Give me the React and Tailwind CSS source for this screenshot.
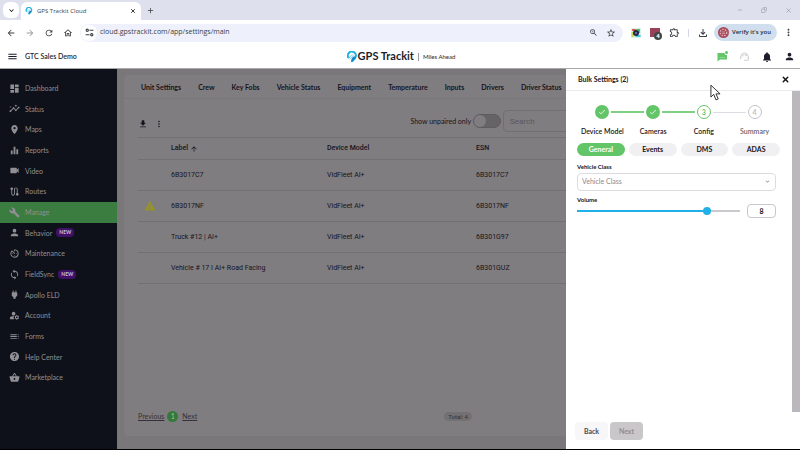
import { useState } from "react";
import {
  MdAdd,
  MdArrowBack,
  MdArrowForward,
  MdArrowUpward,
  MdAvTimer,
  MdBuild,
  MdCheck,
  MdDashboard,
  MdEqualizer,
  MdFileDownload,
  MdHelp,
  MdInsights,
  MdKeyboardArrowDown,
  MdLocationOn,
  MdManageAccounts,
  MdMenu,
  MdMoreVert,
  MdNotifications,
  MdOutlineExtension,
  MdOutlineFileDownload,
  MdOutlineHome,
  MdOutlineSupportAgent,
  MdPerson,
  MdPower,
  MdRefresh,
  MdRoute,
  MdShoppingBasket,
  MdStarBorder,
  MdSync,
  MdToc,
  MdVideocam,
  MdWarning,
  MdZoomIn,
} from "react-icons/md";
import { Copy, Minus, X } from "lucide-react";

const navItems = [
  { label: "Dashboard", icon: MdDashboard },
  { label: "Status", icon: MdInsights },
  { label: "Maps", icon: MdLocationOn },
  { label: "Reports", icon: MdEqualizer },
  { label: "Video", icon: MdVideocam },
  { label: "Routes", icon: MdRoute },
  { label: "Manage", icon: MdBuild, active: true },
  { label: "Behavior", icon: MdPerson, isNew: true },
  { label: "Maintenance", icon: MdAvTimer },
  { label: "FieldSync", icon: MdSync, isNew: true },
  { label: "Apollo ELD", icon: MdPower },
  { label: "Account", icon: MdManageAccounts },
  { label: "Forms", icon: MdToc },
  { label: "Help Center", icon: MdHelp },
  { label: "Marketplace", icon: MdShoppingBasket },
];

const tabs = [
  "Unit Settings",
  "Crew",
  "Key Fobs",
  "Vehicle Status",
  "Equipment",
  "Temperature",
  "Inputs",
  "Drivers",
  "Driver Status",
];

const units = [
  { label: "6B3017C7", model: "VidFleet AI+", esn: "6B3017C7" },
  { label: "6B3017NF", model: "VidFleet AI+", esn: "6B3017NF", warning: true },
  { label: "Truck #12 | AI+", model: "VidFleet AI+", esn: "6B301G97" },
  {
    label: "Vehicle # 17 I AI+ Road Facing",
    model: "VidFleet AI+",
    esn: "6B301GUZ",
  },
];

const steps = [
  { label: "Device Model", state: "done" },
  { label: "Cameras", state: "done" },
  { label: "Config", state: "current" },
  { label: "Summary", state: "todo" },
];

const sections = ["General", "Events", "DMS", "ADAS"];

const PinLogo = ({ className }) => (
  <svg viewBox="0 0 24 30" className={className} aria-hidden="true">
    <path
      d="M4 18A10 10 0 1 1 21 15C19 20 15 22 12 27"
      fill="none"
      stroke="#1fb4e6"
      strokeWidth="5"
      strokeLinejoin="round"
    />
    <path d="M10 29C9 23 11 18 16 14L22 14C21 21 15 23 10 29Z" fill="#1583c7" />
    <path
      d="M5 17L12 9M8 20L15 11"
      stroke="#53c8ee"
      strokeWidth="2"
      strokeLinecap="round"
    />
  </svg>
);

const ChatIcon = () => (
  <svg viewBox="0 0 22 22" className="h-[11px] w-[11px] text-[#62c568]" aria-hidden="true">
    <path d="M1 4H15A4 4 0 0 0 20 8V17H6L1 21Z" fill="currentColor" />
    <path d="M5 13H16" stroke="#bfe8c1" strokeWidth="1" />
    <circle cx="19" cy="3" r="3" fill="currentColor" />
  </svg>
);

const BrowserChrome = () => (
  <div className="bg-[#dee1ed] font-['Open_Sans',sans-serif] text-[#3c4043]">
    <div className="flex h-5 items-center pr-2 pl-[3px]">
      <button
        aria-label="Search tabs"
        className="flex h-4 w-4 items-center justify-center rounded-md bg-white text-black"
      >
        <MdKeyboardArrowDown size={9} />
      </button>
      <div className="ml-[2px] flex h-full items-end">
        <div className="flex h-[18px] w-[120px] items-center rounded-t-md bg-white px-1">
          <PinLogo className="h-2 w-2" />
          <span className="ml-1 flex-1 text-[6px]">GPS Trackit Cloud</span>
          <button aria-label="Close tab" className="p-px text-black">
            <X size={6} strokeWidth={3} />
          </button>
        </div>
      </div>
      <button aria-label="New tab" className="ml-1 p-px">
        <MdAdd size={9} />
      </button>
      <div className="ml-auto flex items-center gap-[18px] text-[#8b8d96]">
        <Minus size={6} />
        <Copy size={6} className="-scale-x-100" />
        <X size={7} />
      </div>
    </div>
    <div className="flex h-[25px] items-center bg-white pr-[6px] pl-[6px]">
      <div className="flex items-center gap-[9px]">
        <MdArrowBack size={10} />
        <MdArrowForward size={10} className="text-[#9a9ca3]" />
        <MdRefresh size={10} />
        <MdOutlineHome size={10} />
      </div>
      <div className="ml-[7px] flex h-[18px] flex-1 items-center rounded-full bg-[#eef1fb] pr-[7px] pl-px">
        <span className="flex h-4 w-4 items-center justify-center rounded-full bg-white">
          <svg
            viewBox="0 0 16 16"
            className="h-[9px] w-[9px]"
            fill="none"
            stroke="currentColor"
            strokeWidth="2"
          >
            <circle cx="4" cy="4" r="2" />
            <path d="M8 4H15M1 12H8" />
            <circle cx="12" cy="12" r="2" />
          </svg>
        </span>
        <input
          aria-label="Address"
          defaultValue="cloud.gpstrackit.com/app/settings/main"
          className="ml-[3px] min-w-0 flex-1 bg-transparent text-[7px] outline-none"
        />
        <MdZoomIn size={9} />
        <MdStarBorder size={10} className="ml-2" />
      </div>
      <div className="flex items-center pl-2">
        <svg viewBox="0 0 20 20" className="h-[10px] w-[10px]">
          <rect width="20" height="20" fill="#d9f3e6" />
          <path d="M2 2H10V6H2Z" fill="#e85b4a" />
          <path d="M10 2H18V10H14Z" fill="#4fc06b" />
          <path d="M12 14H19V18H8Z" fill="#39cfe0" />
          <path d="M1 8H5V18H1Z" fill="#b9dc4d" />
          <circle cx="10" cy="10" r="6" fill="#2b2547" />
          <circle cx="10" cy="10" r="2" fill="#6b86d6" />
        </svg>
        <span className="relative ml-[9px] h-[9px] w-[10px] bg-[#96435a]">
          <span className="absolute top-1 left-1 flex h-2 w-2 items-center justify-center rounded-sm bg-[#444] text-[6px] font-bold text-white">
            4
          </span>
        </span>
        <MdOutlineExtension size={11} className="ml-[9px]" />
        <span className="ml-2 h-2 w-px bg-[#d5d8e6]" />
        <MdOutlineFileDownload size={12} className="ml-2" />
        <button className="ml-[5px] flex h-[17px] items-center gap-[3px] rounded-full bg-[#d0deee] pr-[6px] pl-1 text-[6px] font-semibold text-[#20303f]">
          <svg viewBox="0 0 20 20" className="h-[11px] w-[11px]">
            <circle cx="10" cy="10" r="10" fill="#a8495a" />
            <circle
              cx="10"
              cy="10"
              r="6"
              fill="none"
              stroke="#e6b9c0"
              strokeWidth="2"
              strokeDasharray="3 2"
            />
            <path d="M7 9H13M7 12H13" stroke="#f0d4d8" strokeWidth="1" />
          </svg>
          Verify it's you
        </button>
        <MdMoreVert size={11} className="ml-[6px]" />
      </div>
    </div>
  </div>
);

const AppHeader = () => (
  <header className="grid h-6 grid-cols-3 items-center border-b border-[#a9a9ab] bg-white pr-[5px] pl-[7px] text-[#1d1d2b]">
    <div className="flex items-center gap-[7px]">
      <button aria-label="Toggle menu">
        <MdMenu size={11} />
      </button>
      <span className="text-[7px] font-semibold">GTC Sales Demo</span>
    </div>
    <div className="flex items-center justify-center">
      <PinLogo className="h-3 w-[10px]" />
      <span className="ml-px text-[11px] font-bold">GPS Trackit</span>
      <span className="mx-1 h-2 w-px bg-[#9a9aa2]" />
      <span className="text-[6px]">Miles Ahead</span>
    </div>
    <div className="flex items-center justify-end gap-[11px]">
      <ChatIcon />
      <MdOutlineSupportAgent size={11} className="text-[#cfcfd4]" />
      <MdNotifications size={12} />
      <MdPerson size={11} />
    </div>
  </header>
);

const Sidebar = () => (
  <nav className="w-[117px] shrink-0 bg-[#0e1119] pt-[9px] text-[#8f8f94]">
    <ul className="grid h-[310px] auto-rows-fr">
      {navItems.map(({ label, icon: Icon, active, isNew }) => (
        <li key={label} className={active ? "bg-[#3b7d40]" : ""}>
          <a href="#" className="flex h-full items-center pl-[9px] text-[7px]">
            <Icon size={11} />
            <span className="ml-[5px]">{label}</span>
            {isNew && (
              <span className="ml-1 flex h-[9px] items-center rounded-sm bg-[#3f1168] px-[3px] text-[5px] font-black text-[#c3b5d0]">
                NEW
              </span>
            )}
          </a>
        </li>
      ))}
    </ul>
  </nav>
);

const UnitsPanel = () => (
  <main className="min-w-0 flex-1 overflow-hidden bg-[#7a777a] pt-[6px] pb-[13px] pl-[7px] text-[#16141c]">
    <div className="flex h-full flex-col rounded-l-sm bg-[#807d80]">
      <div className="flex h-6 items-center gap-[17px] border-b border-[#7a777a] pt-px pl-[17px] text-[7px] font-bold whitespace-nowrap">
        {tabs.map((tab) => (
          <button key={tab} className="shrink-0">
            {tab}
          </button>
        ))}
      </div>

      <div className="flex h-[38px] items-center pl-[14px]">
        <div className="flex items-center gap-[6px] pt-3">
          <button aria-label="Download">
            <MdFileDownload size={10} />
          </button>
          <button aria-label="More options">
            <MdMoreVert size={10} />
          </button>
        </div>
        <div className="ml-auto flex shrink-0 items-center pt-[6px]">
          <label htmlFor="unpaired" className="text-[7px]">
            Show unpaired only
          </label>
          <input
            id="unpaired"
            type="checkbox"
            className="ml-[2px] h-[14px] w-7 appearance-none rounded-full border border-[#5f5c5f] bg-[#666366] before:block before:h-3 before:w-3 before:rounded-full before:bg-[#807d80]"
          />
          <input
            aria-label="Search"
            placeholder="Search"
            className="-mr-px ml-[2px] h-[22px] w-16 rounded-l-sm border border-[#726f72] pl-[6px] font-[Roboto,sans-serif] text-[8px] outline-none placeholder:text-[#5b585c]"
          />
        </div>
      </div>

      <div className="pl-[14px]">
        <table className="w-full table-fixed border-t border-[#727073] text-left font-[Roboto,sans-serif] text-[7px]">
          <thead>
            <tr className="h-[22px] border-b border-[#727073]">
              <th className="w-[33px]" />
              <th className="w-[156px] font-medium">
                <span className="flex items-center gap-[2px]">
                  Label <MdArrowUpward size={8} />
                </span>
              </th>
              <th className="w-[149px] font-medium">Device Model</th>
              <th className="font-medium">ESN</th>
            </tr>
          </thead>
          <tbody>
            {units.map((unit) => (
              <tr key={unit.label} className="h-[31px] border-b border-[#727073]">
                <td className="pl-[6px]">
                  {unit.warning && (
                    <MdWarning size={12} className="text-[#94932a]" />
                  )}
                </td>
                <td>{unit.label}</td>
                <td>{unit.model}</td>
                <td>{unit.esn}</td>
              </tr>
            ))}
          </tbody>
        </table>
      </div>

      <div className="mt-auto flex h-10 items-center pl-[14px] text-[7px] text-[#343138]">
        <a href="#" className="underline">
          Previous
        </a>
        <span className="ml-[3px] flex h-[11px] w-[11px] items-center justify-center rounded-full bg-[#337a3a] text-[#b5bd8c]">
          1
        </span>
        <a href="#" className="ml-1 underline">
          Next
        </a>
        <span className="mr-[94px] ml-auto rounded-full bg-[#737073] px-1 font-[Roboto,sans-serif] text-[6px]">
          Total: 4
        </span>
      </div>
    </div>
  </main>
);

const connectorStyles = {
  none: "h-[2px] flex-1",
  done: "h-[2px] flex-1 bg-[#7fd085]",
  todo: "h-px flex-1 bg-[#dedce2]",
};

const badgeStyles = {
  done: "bg-[#62c568] text-white",
  current: "border border-[#62c568] font-bold text-[#62c568]",
  todo: "border border-[#c4c1c8] font-bold text-[#c4c1c8]",
};

const Stepper = () => (
  <ol className="grid grid-cols-4">
    {steps.map((step, index) => {
      const before =
        index === 0 ? "none" : step.state === "todo" ? "todo" : "done";
      const after =
        index === steps.length - 1
          ? "none"
          : step.state === "done"
            ? "done"
            : "todo";

      return (
        <li key={step.label} className="flex flex-col items-center">
          <div className="flex w-full items-center gap-[2px]">
            <span className={connectorStyles[before]} />
            <span
              className={`flex h-[14px] w-[14px] items-center justify-center rounded-full text-[7px] ${badgeStyles[step.state]}`}
            >
              {step.state === "done" ? <MdCheck size={8} /> : index + 1}
            </span>
            <span className={connectorStyles[after]} />
          </div>
          <span
            className={
              step.state === "todo"
                ? "mt-[7px] text-[7px] font-semibold text-[#66636b]"
                : "mt-[7px] text-[7px] font-semibold"
            }
          >
            {step.label}
          </span>
        </li>
      );
    })}
  </ol>
);

const BulkSettings = () => {
  const [section, setSection] = useState("General");
  const [volume, setVolume] = useState(8);
  const filled = volume * 10;

  return (
    <aside className="flex w-[234px] shrink-0 flex-col bg-white text-[#17161d]">
      <div className="flex h-[22px] items-center justify-between border-b border-[#ebebed] pr-[10px] pl-3">
        <h2 className="text-[7px] font-bold">Bulk Settings (2)</h2>
        <button aria-label="Close">
          <X size={9} strokeWidth={4} />
        </button>
      </div>

      <div className="flex flex-1">
        <div className="flex flex-1 flex-col pt-[14px] pb-[9px] pl-[11px]">
          <div className="pr-3">
            <Stepper />
            <div className="mt-[6px] grid grid-cols-4 gap-1">
              {sections.map((name) => (
                <button
                  key={name}
                  onClick={() => setSection(name)}
                  className={
                    name === section
                      ? "h-[13px] rounded-full bg-[#62c568] text-[7px] font-bold text-white"
                      : "h-[13px] rounded-full bg-[#f0eff2] text-[7px] font-bold"
                  }
                >
                  {name}
                </button>
              ))}
            </div>
          </div>

          <div className="flex flex-col pt-[6px] pr-4">
            <label htmlFor="vehicle-class" className="text-[6px] font-bold">
              Vehicle Class
            </label>
            <div className="mt-[2px] grid items-center">
              <select
                id="vehicle-class"
                className="col-start-1 row-start-1 h-[18px] appearance-none rounded-sm border border-[#dddbe0] pl-1 text-[7px] text-[#8b8890]"
              >
                <option>Vehicle Class</option>
              </select>
              <MdKeyboardArrowDown
                size={7}
                className="pointer-events-none col-start-1 row-start-1 mr-[5px] justify-self-end text-[#8b8890]"
              />
            </div>
            <label htmlFor="volume" className="mt-1 text-[6px] font-bold">
              Volume
            </label>
            <div className="flex items-center gap-[7px]">
              <input
                id="volume"
                type="range"
                min="0"
                max="10"
                value={volume}
                onChange={(event) => setVolume(Number(event.target.value))}
                className="-mx-1 h-[2px] min-w-0 flex-1 appearance-none [&::-webkit-slider-thumb]:h-2 [&::-webkit-slider-thumb]:w-2 [&::-webkit-slider-thumb]:appearance-none [&::-webkit-slider-thumb]:rounded-full [&::-webkit-slider-thumb]:bg-[#21b0e8]"
                style={{
                  background: `linear-gradient(to right, transparent 4px, #21b0e8 4px ${filled}%, #cbc9ce ${filled}% calc(100% - 4px), transparent 0)`,
                }}
              />
              <input
                aria-label="Volume value"
                value={volume}
                onChange={(event) => setVolume(Number(event.target.value) || 0)}
                className="h-[14px] w-[29px] rounded-sm border border-[#c9c7cd] text-center text-[7px] font-bold outline-none"
              />
            </div>
          </div>

          <div className="mt-auto -ml-[2px] flex gap-[2px] text-[7px] font-bold">
            <button className="h-[18px] w-[33px] rounded-sm bg-[#f7f6f9] text-[#4a4850]">
              Back
            </button>
            <button
              disabled
              className="h-[18px] w-[33px] rounded-sm bg-[#cac7cb] text-[#8f8c92]"
            >
              Next
            </button>
          </div>
        </div>
        <div className="w-2 pb-[37px]">
          <div className="h-full bg-[#bbb8bd]" />
        </div>
      </div>
    </aside>
  );
};

const Pointer = () => (
  <svg
    viewBox="0 0 12 18"
    className="pointer-events-none absolute top-[84px] right-[79px] h-[17px] w-[11px]"
    aria-hidden="true"
  >
    <path
      d="M1 1V14L4 11L6.500 17L9 16L6.500 10.500H11Z"
      fill="#fff"
      stroke="#222"
      strokeWidth="1"
    />
  </svg>
);

const App = () => (
  <div className="relative flex min-h-screen flex-col border-b border-black font-[Lato,sans-serif]">
    <BrowserChrome />
    <AppHeader />
    <div className="flex flex-1">
      <Sidebar />
      <UnitsPanel />
      <BulkSettings />
    </div>
    <Pointer />
  </div>
);

export default App;
